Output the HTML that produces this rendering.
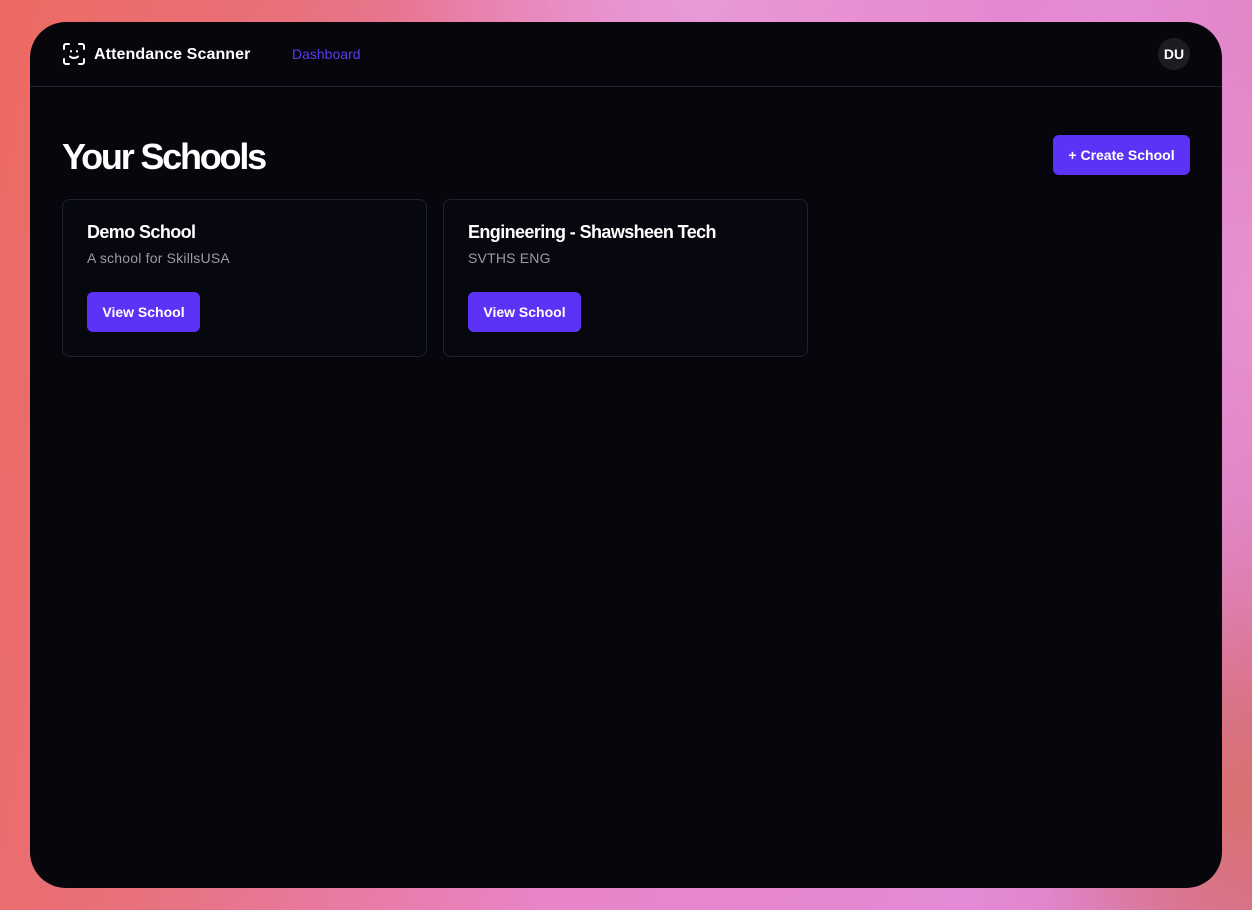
<!DOCTYPE html>
<html><head><meta charset="utf-8"><style>
*{box-sizing:border-box;margin:0;padding:0}
html,body{width:1252px;height:910px;overflow:hidden}
body{font-family:"Liberation Sans",sans-serif;position:relative;
background:
radial-gradient(ellipse 300px 200px at 700px 0px,#e89ad8 0%,rgba(232,154,216,0) 100%),
radial-gradient(ellipse 250px 400px at 1252px 300px,#e890d0 0%,rgba(232,144,208,0) 100%),
radial-gradient(ellipse 200px 300px at 1240px 800px,#d87070 0%,rgba(216,112,112,0) 100%),
linear-gradient(100deg,#ec6a62 0%,#e8707a 20%,#e884c8 50%,#e48ad6 80%,#d878b0 100%);}
.win{position:absolute;left:30px;top:22px;width:1192px;height:866px;background:#06060c;border-radius:36px;overflow:hidden}
.hdr{height:65px;border-bottom:1px solid #1d2330;position:relative}
.logo{position:absolute;left:33px;top:21px}
.brand{position:absolute;left:64px;top:24px;color:#fff;font-weight:bold;font-size:16px;letter-spacing:0.1px}
.nav{position:absolute;left:262px;top:24px;color:#5b3bf0;font-size:14px}
.av{position:absolute;right:32px;top:16px;width:32px;height:32px;border-radius:50%;background:#1c1c22;color:#fff;font-weight:bold;font-size:14px;text-align:center;line-height:32px}
h1{position:absolute;left:32px;top:114px;color:#fff;font-size:36px;font-weight:bold;letter-spacing:-2.2px}
.create{position:absolute;right:32px;top:113px;width:137px;height:40px;background:#5c33f6;border-radius:6px;color:#fff;font-weight:bold;font-size:14px;text-align:center;line-height:40px}
.card{position:absolute;top:177px;width:365px;height:158px;border:1px solid #1d2330;border-radius:8px;background:#07070f}
.card h2{position:absolute;left:24px;top:22px;color:#fff;font-size:18px;font-weight:bold;letter-spacing:-0.6px}
.card p{position:absolute;left:24px;top:50px;color:#9a9aa6;font-size:14px;letter-spacing:0.2px}
.card .b{position:absolute;left:24px;top:92px;width:113px;height:40px;background:#5c33f6;border-radius:6px;color:#fff;font-weight:bold;font-size:14px;text-align:center;line-height:40px}
</style></head><body>
<div class="win">
<div class="hdr">
<svg class="logo" width="22" height="22" viewBox="0 0 22 22" fill="none" stroke="#fff" stroke-width="2" stroke-linecap="round"><path d="M1 6V3a2 2 0 0 1 2-2h3M16 1h3a2 2 0 0 1 2 2v3M21 16v3a2 2 0 0 1-2 2h-3M6 21H3a2 2 0 0 1-2-2v-3"/><path d="M7 13.5c2 2 6 2 8 0"/><path d="M8 8v.5M14 8v.5"/></svg>
<div class="brand">Attendance Scanner</div>
<div class="nav">Dashboard</div>
<div class="av">DU</div>
</div>
<h1>Your Schools</h1>
<div class="create">+ Create School</div>
<div class="card" style="left:32px"><h2>Demo School</h2><p>A school for SkillsUSA</p><div class="b">View School</div></div>
<div class="card" style="left:413px"><h2>Engineering - Shawsheen Tech</h2><p>SVTHS ENG</p><div class="b">View School</div></div>
</div>
</body></html>
